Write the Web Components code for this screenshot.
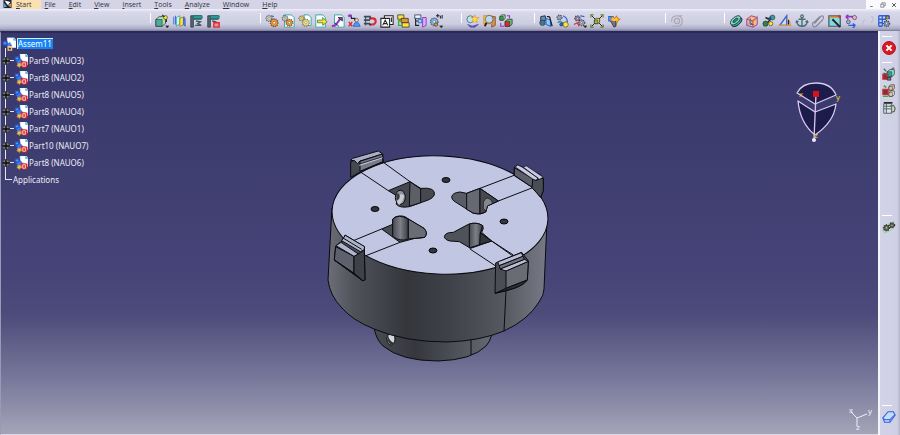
<!DOCTYPE html>
<html lang="en">
<head>
<meta charset="utf-8">
<title>Assem11</title>
<style>
  html, body { margin: 0; height: 100%; }
  body { font-family: "Open Sans", "Noto Sans", sans-serif; color: #33333f; overflow: hidden; background: #d2d2e6; }
</style>
</head>
<body>
<cad-app></cad-app>
<script>
const K = '#222', B = '#2b62d8', Y = '#ffe23a', O = '#e8932a', T = '#2fa39b', R = '#d92a35', G = '#3fae3a', P = '#9a35c8';
const gear = (x, y, r, c, k = '#3c3c48') => `<circle cx="${x}" cy="${y}" r="${r}" fill="none" stroke="${k}" stroke-width="2.200" stroke-dasharray="1 1.200"/><circle cx="${x}" cy="${y}" r="${r}" fill="${c}" stroke="${k}" stroke-width=".6"/><circle cx="${x}" cy="${y}" r="${r / 2.6}" fill="#fff" stroke="${k}" stroke-width=".6"/>`;
const page = (x, y, w = 9, h = 12) => `<path d="M${x} ${y}h${w - 3}l3 3v${h - 3}h-${w}z" fill="#f6ffff" stroke="${T}" stroke-width="1"/>`;
const cube = (x, y, s, c, d) => `<path d="M${x} ${y + s * .3}l${s * .35}-${s * .3}h${s * .65}v${s * .7}l-${s * .35} ${s * .3}h-${s * .65}z" fill="${d}" stroke="${K}" stroke-width=".8"/><path d="M${x} ${y + s * .3}h${s * .65}v${s * .7}h-${s * .65}z" fill="${c}" stroke="${K}" stroke-width=".6"/>`;
const line = (d, c = K, w = 1.3, f = 'none') => `<path d="${d}" fill="${f}" stroke="${c}" stroke-width="${w}"/>`;
const dot = (x, y, r, c) => `<circle cx="${x}" cy="${y}" r="${r}" fill="${c}" stroke="${K}" stroke-width=".6"/>`;
const more = line('M12 13.5h4l-2 2.5z', K, .3, K);
const ICONS = {
  logo: `<path d="M0 0h16v16H0z" fill="#152536"/><path d="M2 1l12 3-6 6z" fill="#fff"/><path d="M7 9l8-2v8z" fill="#f08a30"/><path d="M1 6l6 7-6 2z" fill="#49a5d5"/>`,
  box: cube(1, 3, 11, '#4dac9c', '#a6e5ad') + dot(12, 4, 2.2, Y) + line('M8 1l3 2M13 6v3') + more,
  plates: line('M2 3v9M4 2v10', B, 1) + line('M5 4l4-2v9l-4 3z', T, .9, '#c9f8e8') + line('M9 5l5-2v9l-5 2z', '#947c15', .9, Y) + line('M13 4l2 1v9l-2-2z', B, 1, '#5686de'),
  clamp: line('M2 2v13h3V6h9V2z', '#3a4650', 1, '#566370') + line('M5 2h10v3H5z', '#17736d', 1, T) + line('M8 8l5 1-3 2 4 2H7', '#3f5c66', 1.600),
  clampRed: line('M2 2v13h3V6h9V2z', '#3a4650', 1, '#566370') + line('M5 2h10v3H5z', '#17736d', 1, T) + line('M7 8l5 1', '#3f5c66', 1.600) + line('M9 10h6v5H9z', R, 1.6, '#f58a92'),
  gears: gear(4.5, 5, 3, '#e9d98a', '#45659c') + gear(10.500, 10, 4, '#f0a23c', '#7d3d12') + line('M7 2l3 1', B),
  gearPage: page(4, 1, 11, 14) + gear(4.500, 5, 2.8, '#e9d98a', '#45659c') + gear(9.500, 10, 3.500, '#f0a23c', '#7d3d12'),
  gearPale: page(7, 1, 8, 12) + gear(4, 5, 2.5, '#f2e58a', '#7b7334') + gear(9, 10, 3.600, '#efe596', '#7b7334'),
  pageOut: page(2, 1, 11, 14) + line('M4 7h6V4l5 5-5 4v-3H4z', '#29651f', .8, Y),
  pageRev: page(4, 1, 11, 14) + line('M1 14l4-1 6-8', P, 2.4) + line('M8 4h5v4z', K, .8, P) + line('M4 10l5 4', K, 1),
  person: line('M1 2h4v3h4v3', K) + line('M2 1h3v2H2z', P, 1, P) + dot(11, 7, 2, '#ffd39c') + line('M7 14l2-4h4l2 4z', B, 1, '#4aa1ed') + line('M2 9l4 5M6 9l-4 5', R, 1.6),
  magnet: line('M1 3h8M1 7h7M1 11h7', '#3b4c5a', 1.800) + line('M3 3v10', '#3b4c5a', 1.2) + line('M8 5h3a3.500 3.500 0 0 1 0 7H8', R, 2.4) + line('M8 4v2M8 11v2', K, 1.6),
  label: line('M5 2h10v10H5z', K, 1.2, '#fff') + line('M1 5h10v10H1z', K, 1.2, '#fff') + line('M3 13l3-6 3 6M4 11h4M13 4v5', K, 1.2),
  tree1: line('M2 1h7v5H2z', K, .8, Y) + line('M6 5h8v5H6z', K, .8, O) + line('M7 10h8v5H7z', K, .8, Y) + line('M3 6v7h4M3 8h3', G, 1.500),
  tree2: line('M2 1h7v4H2z', K, .8, '#e8f7ff') + line('M3 5v8h4M3 8h4', K) + line('M6 6h4v4H6z', B, 1, '#8fe1ef') + line('M11 4h4v9l-4 2z', P, 1.1, '#c7b9fb'),
  gearNum: gear(6, 9, 4, '#8fb6dc', '#2f5580') + dot(8, 12, 2, O) + line('M8 2h4M10 0v4M13 2v3M15 1v4', K, 1.2) + more,
  catalog: dot(5, 6, 4, '#b5e5ef') + line('M10 1l1 3h4l-3 2 1 4-3-2-3 2 1-4-2-2h3z', O, .8, Y) + line('M2 12l5 2 7-2-4 3H5z', B, 1, R),
  lens: line('M9 3h5v10l-4 2V6z', '#805020', 1, '#d69658') + line('M1 2h9v9H1z', O, 1.4, Y) + dot(7, 6, 4.500, '#bdd8ee') + line('M4 10l-2 4', K, 2),
  cubes: cube(1, 1, 6, '#35a856', '#8ff3a4') + cube(7, 6, 8, R, '#62c979') + line('M2 10v4h4M9 2h3v3', P),
  glass: line('M2 3l5-1 1 5-6 1z', K, 1, '#5f91c2') + dot(4, 10, 3.2, '#43768f') + line('M8 5l5 2v7l-5-2z', B, 1.2, '#8bd3f5') + line('M12 3l3 11M9 3h3', K, 1.500),
  sensor: gear(4, 4, 2.4, '#aecbe1') + line('M8 2q5 2 5 7', B, 1.4) + line('M2 10q3-3 6 1', T, 2) + dot(11, 12, 3, Y) + dot(6, 12, 1.800, B),
  pair: gear(5, 5, 2.600, '#a88cc8') + gear(10, 10, 3, '#b8b8c4') + line('M1 12l4-2 2 4', R, 1.4) + line('M8 2l5 1', B) + more,
  explode: line('M2 2l12 12M14 2L2 14', K, 1.1) + cube(5, 5, 6, '#90bd3b', Y) + line('M1 4V1h3M12 1h3v3M1 12v3h3M12 15h3v-3', '#55851f'),
  filter: line('M2 3h5v5H2z', B, 1.2, '#65a4d7') + line('M6 3l3 2 2-3 1 3 3 1-3 2-2 6-2-5-4-2z', '#c56e12', 1, '#ffc22e') + line('M4 8l4 7 2-1V8', K, .8, '#6c7698'),
  swirl: line('M2 9Q1 3 7 2q7 0 7 6t-6 6H2M14 2h-4M11 8q0-3-3-3t-3 3 3 3 3-3M8 8h1', '#a9a9b5', 1.400),
  swirlPale: line('M13 3q2 5-2 7M3 13q-2-5 2-7M11 3h3M2 13h4', '#c1c1cf', 1.5),
  coin: `<g transform="rotate(-40 8 8)"><ellipse cx="8" cy="9.500" rx="7" ry="3.600" fill="${T}" stroke="${K}"/><ellipse cx="8" cy="7" rx="7" ry="3.600" fill="#8fd0c6" stroke="#254e4b"/><ellipse cx="8" cy="7" rx="3.500" ry="1.400" fill="#238c80" stroke="#254e4b"/></g>`,
  prism: line('M2 6l5-4 7 2v8l-5 3-7-2z', P, 1.1, '#f3c16e') + line('M2 6l7 2 5-4M9 8v7', R, 1) + line('M6 5v7h4M5 9l4 3', B, 1.1) + line('M1 14L15 2', '#888', .8),
  joint: line('M6 10l4-4M4 4l4 2', K, 1.600) + dot(12, 4, 2.800, T) + dot(4, 11, 3, '#317f4f') + dot(10, 11, 2.400, Y) + dot(9, 5, 1.4, B),
  angle: line('M2 13L10 2v11z', B, 1.500, '#c9dcff') + line('M1 13h14M10 5q4 3 4 8', O, 1.500) + line('M12 7v5', K),
  anchor: line('M8 4v10M4 6h8M2 9q1 5 6 5t6-5M1 10l1-2 2 1M12 9l2-1 1 2', '#456f73', 1.6) + `<circle cx="8" cy="2.600" r="1.600" fill="none" stroke="#456f73" stroke-width="1.300"/>`,
  clip: line('M4 11l7-8q2-2 3 0t-1 4l-7 7q-3 2-4-1t2-4l6-6', '#858592', 1.3),
  wizard: line('M1 2h13v12H1z', '#405a64', 1.4, '#84d9db') + line('M1 3h13', '#cd7a29', 2) + line('M5 6l3 3M8 9l6 6', K, 2.200) + line('M13 1v4M11 3h4', R, 1),
  cycle: line('M2 3h6q5 0 5 3M2 3l3-2M2 3l3 3', P, 1.8) + dot(12, 4, 2.4, '#efabd9') + dot(5, 9, 2.2, '#aaa9d8') + line('M5 13h8M13 13l-3-2M13 13l-3 3', B, 1.6),
  pattern: line('M2 2h12M2 6h8M2 10h5M2 14h4M2 2v12M6 2v12M10 2v5M14 2v4', B, 1.500) + gear(11, 11, 3, '#83a9c4') + dot(12, 4, 1.600, O),
  close: `<circle cx="8" cy="8" r="7.400" fill="#e01620" stroke="#a40c18"/><path d="M5 5l6 6M11 5l-6 6" stroke="#fff" stroke-width="2.400"/>`,
  geo1: cube(6, 3, 8, T, '#97e8da') + line('M1 8h5v6H1z', R, 1.400, '#803040') + line('M2 2l3 3M2 7l6 2M11 2l3-1', '#4b6c5a', 1.5) + line('M6 12h4v3H6z', K, .8, '#777'),
  geo2: cube(8, 1, 6, '#dec9a4', '#ffe2ad') + cube(8, 8, 6, '#e1d5b1', '#fff') + line('M1 6h6v6H1z', R, 1.400, '#803040') + line('M2 2l3 2M1 14h6', G, 1.800),
  list: line('M2 3h9v11H2zM2 6h9M2 9h9M5 3v11', '#54616f', 1.1, '#d8e8de') + line('M2 2h10', K, 1.6) + line('M9 6l4-1 2 3-1 4-4 1', '#6b7355', 1.500),
  mech: line('M1 12l3-6 9-4-2 9-8 4z', '#8bd2a1', 1, '#bfe3ce') + gear(5, 9, 3, '#69695a', '#20201d') + gear(11.500, 6, 2.500, '#777563', '#20201d'),
  eraser: line('M1 9l6-7h6l2 4-6 8H3z', B, 1.2, '#c8dcff') + line('M1 9l2 2h6l6-6M9 11v3', '#3f6fe0', 1.200),
  part: line('M7 0h7l2 3v9H8z', '#d9edff', .8, '#fff') + `<path d="M13 0l3 3h-3z" fill="#29a7d5"/>` + gear(3.500, 5, 2, '#3e7bed', '#1f57d8') + line('M2 8l5-3 3 4-5 2z', '#1f57d8', 1, '#367ae5') + line('M8 8l7 1v6H9z', '#cc2027', .6, '#e52b2b') + line('M10 10h3v4h-3z', '#fff', .8) + gear(6, 12.500, 2, '#f4ca62', '#c79440'),
  root: line('M6 1h8l2 3v8H7z', '#d9edff', .8, '#fff') + `<path d="M13 1l3 3h-3z" fill="#29a7d5"/>` + gear(3.500, 7, 2.200, '#3e7bed', '#1f57d8') + gear(8, 9, 2, '#3e7bed', '#1f57d8') + line('M7 11h4v4H7z', '#f4ca62', 1.4),
  plus: `<circle cx="8" cy="8" r="7" fill="#7d817e" stroke="#2c2e38" stroke-width="1.200"/><path d="M8 1v14M1 8h14" stroke="#0a0a0d" stroke-width="2.600"/>`,
  min: line('M3 12h7', '#555', 2),
  restore: line('M2 6h8v8H2zM5 6V2h9v8h-4', '#555', 1.600),
  shut: line('M3 3l10 10M13 3L3 13', '#444', 2.400)
};

function define(name, markup) {
  const t = document.createElement('template');
  customElements.define(name, class extends HTMLElement {
    connectedCallback() {
      if (this.shadowRoot) return;
      t.innerHTML = typeof markup === 'function' ? markup(this) : markup;
      this.attachShadow({ mode: 'open' }).append(t.content.cloneNode(true));
    }
  });
}

define('cad-icon', el => `
  <style>:host { display: block; width: 14px; height: 14px; flex: none; } svg { display: block; width: 100%; height: 100%; }</style>
  <svg viewBox="0 0 16 16" aria-hidden="true">${ICONS[el.getAttribute('name')]}</svg>`);

define('cad-tool', el => `
  <style>
    :host { display: block; flex: none; }
    button { display: block; border: 0; padding: 0; background: none; cursor: pointer; }
  </style>
  <button type="button" aria-label="${el.getAttribute('name')}"><cad-icon name="${el.getAttribute('name')}"></cad-icon></button>`);

define('cad-menu-item', el => {
  const s = el.getAttribute('label');
  return `
  <style>
    :host { display: flex; }
    button { font: inherit; color: inherit; border: 0; background: none; padding: 0 9px 0 4px; line-height: 8px; cursor: pointer; }
    :host([active]) button { background: #fbe0b2; }
    u { text-underline-offset: 1px; text-decoration-thickness: 1px; }
  </style>
  <button type="button"><u>${s[0]}</u>${s.slice(1)}</button>`;
});

define('cad-menu-bar', `
  <style>
    :host { display: flex; height: 9px; font-size: 7px; background: #d4d4e6; }
    nav { display: flex; flex: 1; }
    .logo { width: 12px; display: grid; justify-items: end; }
    .logo cad-icon { width: 9px; height: 8px; }
    .win { display: flex; justify-content: space-around; align-items: center; width: 34px; background: #fafafd; }
    .win button { border: 0; padding: 0; background: none; }
    .win cad-icon { width: 6px; height: 6px; }
  </style>
  <div class="logo"><cad-icon name="logo"></cad-icon></div>
  <nav aria-label="Main menu">
    <cad-menu-item label="Start" active></cad-menu-item>
    ${['File', 'Edit', 'View', 'Insert', 'Tools', 'Analyze', 'Window', 'Help'].map(s => `<cad-menu-item label="${s}"></cad-menu-item>`).join('')}
  </nav>
  <div class="win">
    <button aria-label="Minimize"><cad-icon name="min"></cad-icon></button>
    <button aria-label="Restore"><cad-icon name="restore"></cad-icon></button>
    <button aria-label="Close"><cad-icon name="shut"></cad-icon></button>
  </div>`);

define('cad-tool-group', `
  <style>
    :host { display: flex; align-items: center; position: relative; padding-left: 5px; }
    :host::before { content: ""; position: absolute; left: 0; top: 3px; height: 10px; border-left: 1px solid #fff; }
    div { display: flex; justify-content: space-between; flex: 0 0 var(--span); }
  </style>
  <div><slot></slot></div>`);

const group = (span, names) => `<cad-tool-group style="--span:${span}px">${names.split(' ').map(n => `<cad-tool name="${n}"></cad-tool>`).join('')}</cad-tool-group>`;

define('cad-toolbar', `
  <style>
    :host {
      display: grid; grid-template-columns: 150fr 110fr 201fr 73fr 131fr 59fr 176fr; height: 22px; padding-top: 1px; box-sizing: border-box;
      background: linear-gradient(#f0f0fa, #d8d8ea 3px, #cdcde1 15px, #a9a9c3 20px, #77779a);
    }
  </style>
  <span></span>
  ${group(65, 'box plates clamp clampRed')}
  ${group(178, 'gears gearPage gearPale pageOut pageRev person magnet label tree1 tree2 gearNum')}
  ${group(47, 'catalog lens cubes')}
  ${group(82, 'glass sensor pair explode filter')}
  ${group(14, 'swirl')}
  ${group(162, 'coin prism joint angle anchor clip wizard cycle swirlPale pattern')}`);

define('cad-tree-item', `
  <style>
    :host { display: flex; align-items: center; height: 17px; position: relative; }
    button { border: 0; padding: 0; background: none; z-index: 1; }
    button cad-icon { width: 8px; height: 8px; }
    i { width: 4px; border-top: 1px solid #e5e5ee; }
    span { padding-left: 1px; white-space: nowrap; }
  </style>
  <button type="button" aria-label="Expand"><cad-icon name="plus"></cad-icon></button><i></i>
  <cad-icon name="part"></cad-icon><span><slot></slot></span>`);

define('cad-tree', `
  <style>
    :host { display: block; font-family: "Noto Sans", "Open Sans", sans-serif; font-size: 8px; color: #ececf4; padding: 2px 0 0 1px; }
    .root { display: flex; align-items: center; height: 17px; }
    .root span { background: #1683f5; color: #fff; line-height: 10px; padding-right: 1px; border: solid #d8ecff; border-width: 1px 0 0 1px; margin-left: 1px; white-space: nowrap; }
    .kids { position: relative; }
    .kids::before { content: ""; position: absolute; left: 3px; top: -4px; bottom: 8px; border-left: 1px solid #e5e5ee; }
    .app { display: flex; align-items: center; height: 17px; padding-left: 3px; }
    .app i { width: 7px; border-top: 1px solid #e5e5ee; margin-right: 1px; }
  </style>
  <div class="root"><cad-icon name="root"></cad-icon><span>Assem11</span></div>
  <div class="kids">
    ${['Part9 (NAUO3)', 'Part8 (NAUO2)', 'Part8 (NAUO5)', 'Part8 (NAUO4)', 'Part7 (NAUO1)', 'Part10 (NAUO7)', 'Part8 (NAUO6)'].map(s => `<cad-tree-item>${s}</cad-tree-item>`).join('')}
    <div class="app"><i></i><span>Applications</span></div>
  </div>`);

define('cad-model', `
  <style>:host { display: block; } svg { display: block; width: 100%; height: 100%; }</style>
  <svg viewBox="1 33 877 401" role="img" aria-label="Four-jaw chuck assembly">
    <defs>
      <linearGradient id="side"><stop offset="0" stop-color="#6b6d78"/><stop offset=".12" stop-color="#50525a"/><stop offset=".36" stop-color="#34363c"/><stop offset=".55" stop-color="#3f4148"/><stop offset=".8" stop-color="#565860"/><stop offset="1" stop-color="#777985"/></linearGradient>
      <linearGradient id="base"><stop offset="0" stop-color="#4a4c54"/><stop offset=".35" stop-color="#35373d"/><stop offset="1" stop-color="#666872"/></linearGradient>
      <linearGradient id="bore"><stop offset="0" stop-color="#494b53"/><stop offset=".5" stop-color="#7d7f89"/><stop offset="1" stop-color="#3a3c43"/></linearGradient>
    </defs>
    <g stroke="#0b0b10" stroke-width="1" stroke-linejoin="round">
      <path d="M374 326Q375 338 383 346Q401 361 438 361Q472 360 486 346Q490 342 492 334z" fill="url(#base)"/>
      <path d="M471 338v17"/>
      <ellipse cx="391" cy="339" rx="4" ry="6" fill="#d5d6df"/><path d="M388 335q1 6 6 8q-3 3-5 0t-1-8" fill="#333" stroke="none"/>
      <path d="M332 208L328 280Q330 296 342 308Q352 320 374 329Q405 342 447 342Q480 341 504 331Q528 320 539 302Q544 295 544 289L547 220z" fill="url(#side)"/>
      <ellipse cx="440" cy="215" rx="108" ry="59" transform="rotate(2.500 440 215)" fill="#c1c7e2"/>
      <path d="M506 290l-2 41"/>
    </g>
    <g transform="translate(320 145) scale(.33333)" stroke="#0b0b10" stroke-width="3" stroke-linejoin="round">
      <path d="M120 80L205 137M190 52L270 110" fill="none"/>
      <path d="M205 137L270 110L302 130Q348 126 343 150Q338 160 325 165L268 185Q240 190 229 178Q228 165 235 155z" fill="#46484f"/>
      <path d="M270 110L302 132V173L268 184z" fill="#5d5f67"/>
      <ellipse cx="241" cy="157" rx="15" ry="21" fill="#91939d"/><path d="M229 155q17-13 24-2q-3 14-15 27q-9-4-9-25" fill="#c9cad4" stroke="none"/><path d="M229 146q14-2 9 14q-3 7-9 8z" fill="#3b3c42" stroke="none"/>
      <path d="M185 252L218 238Q215 220 228 215Q250 208 265 222L312 250Q325 264 314 277Q303 280 285 280L240 292z" fill="#4a4c54"/>
      <path d="M218 222Q235 206 265 222V282Q243 291 218 275z" fill="url(#bore)"/>
      <path d="M265 222L312 250Q325 264 314 277L265 282z" fill="#6b6d76"/>
      <path d="M92 50L92 97L122 80L190 52L188 28L175 20z" fill="#46484f"/>
      <path d="M92 46L98 40L175 18L188 27L120 48L112 56L104 47z" fill="#a9aec5"/>
      <path d="M120 49L188 27V50L120 79z" fill="#777a88"/>
      <path d="M118 61L188 38" fill="none" stroke="#c8cde5"/><path d="M118 57L188 35" fill="none" stroke-width="2"/>
    </g>
    <g transform="translate(430 145) scale(.33333)" stroke="#0b0b10" stroke-width="3" stroke-linejoin="round">
      <path d="M150 130L255 90M205 168L308 128M185 288L250 334" fill="none"/>
      <path d="M65 155Q68 143 90 141L110 145L150 130L205 168L172 183L168 200Q155 210 130 205L75 170Q65 165 65 155z" fill="#5a5c65"/>
      <path d="M110 145L150 130V207Q130 209 110 193z" fill="#666973"/>
      <path d="M150 130L205 168L172 183L168 200L150 207z" fill="#474950"/>
      <path d="M160 190V175Q162 160 173 159Q184 161 188 175L172 183L168 198z" fill="#85878f" stroke-width="2"/>
      <path d="M43 275Q45 262 70 262L115 238Q140 230 158 242Q163 250 155 262L185 288L122 310L88 290L60 288Q45 285 43 275z" fill="#50525a"/>
      <path d="M118 237Q140 230 158 242L151 264V298L118 309z" fill="url(#bore)"/>
      <path d="M151 264L185 288L149 299z" fill="#34363d"/>
      <path d="M253 67L262 60L330 88L340 100V137L332 157L308 128L253 92z" fill="#50525b"/>
      <path d="M253 68L308 101V128L253 91z" fill="#5c5f6a"/>
      <path d="M308 101L318 107L328 101L340 100V137L332 157L306 128z" fill="#4b4d55"/>
      <path d="M256 66L263 60L276 66L324 99L318 106L308 102zM278 65L290 63L340 97L328 103z" fill="#c6cbe2" stroke-width="2"/>
    </g>
    <g transform="translate(320 220) scale(.33333)" stroke="#0b0b10" stroke-width="3" stroke-linejoin="round">
      <path d="M100 62L185 27M138 107L240 67M450 87L530 140M515 63L580 105" fill="none"/>
      <path d="M47 78L68 62L75 45L133 80L135 180L128 182L43 120z" fill="#4b4d56"/>
      <path d="M47 80L102 109V160L43 120z" fill="#5e606b"/>
      <path d="M102 109L122 97L133 90L135 180L128 182L102 160z" fill="#3f4148"/>
      <path d="M48 77L63 67L115 102L102 109zM65 62L76 46L134 80L132 90L121 95z" fill="#afb5cd"/>
      <path d="M69 54L125 88" fill="none"/>
      <path d="M43 120L102 160L128 182z" fill="#24262d"/>
      <path d="M527 129L605 97L625 123L622 180Q605 205 525 220z" fill="#4b4d55"/>
      <path d="M558 153L625 124L622 180L558 205z" fill="#696b75"/>
      <path d="M533 126L604 98L609 109L538 137zM540 147L613 118L625 124L558 153z" fill="#b8bdd5"/>
      <path d="M538 137L609 109L613 118L540 147z" fill="#70737f"/>
      <path d="M525 220L558 205L622 180Q606 202 558 211z" fill="#2e3036"/>
    </g>
    <g fill="#33353c" stroke="#08080b"><ellipse cx="446" cy="180" rx="4" ry="2.500"/><ellipse cx="375" cy="209" rx="4" ry="2.500"/><ellipse cx="504" cy="221.500" rx="4" ry="2.500"/><ellipse cx="433" cy="250.500" rx="4" ry="2.500"/></g>
  </svg>`);

define('cad-compass', `
  <style>:host { display: block; width: 48px; height: 66px; } svg { display: block; width: 100%; height: 100%; } text { font: 8px "Liberation Sans", sans-serif; fill: #e6d63c; }</style>
  <svg viewBox="793 79 48 66" role="img" aria-label="Compass">
    <g fill="#1d1b49" stroke="#d8c9f0" stroke-width="1.300" stroke-linejoin="round">
      <path d="M797 93Q802 83 816 83Q831 83 836 95L815 104z"/>
      <path d="M798 101L815 112L836 104Q834 122 815 135Q800 123 798 101z"/>
      <path d="M816 94L814 139" fill="none"/>
    </g>
    <path d="M813 91h6v6h-6z" fill="#db1018"/><circle cx="814" cy="140" r="2" fill="#eeeaff"/>
    <text x="799" y="97">x</text><text x="836" y="100">y</text><text x="814" y="138">z</text>
  </svg>`);

define('cad-axes', `
  <style>:host { display: block; width: 27px; height: 26px; } svg { display: block; width: 100%; height: 100%; } text { font: 8px "Liberation Sans", sans-serif; fill: #f0f0f6; }</style>
  <svg viewBox="847 405 27 26" role="img" aria-label="Axes">
    <path d="M851 412l6 6l10-4M857 418v8" fill="none" stroke="#f0f0f6"/>
    <text x="849" y="413">x</text><text x="868" y="414">y</text><text x="856" y="430">z</text>
  </svg>`);

define('cad-viewport', `
  <style>
    :host { display: block; position: relative; border-left: 1px solid #9a9ab8; border-bottom: 1px solid #d9d9e6; border-top: 2px solid #29285a; box-sizing: border-box;
      background: linear-gradient(#38376c, #3e3d70 30%, #454377 58%, #4c4b7a 70%, #77779a 86%, #a4a4b8); }
    cad-tree { position: absolute; left: 0; top: 0; }
    cad-model { position: absolute; inset: 0; }
    cad-compass { position: absolute; right: 37px; top: 46px; }
    cad-axes { position: absolute; right: 4px; bottom: 3px; }
  </style>
  <cad-model></cad-model><cad-tree></cad-tree><cad-compass></cad-compass><cad-axes></cad-axes>`);

define('cad-side-group', `
  <style>
    :host { display: flex; flex-direction: column; align-items: center; gap: 3px; }
    :host::before { content: ""; width: 10px; border-top: 1px solid #fff; margin-bottom: 1px; align-self: start; margin-left: 2px; }
  </style><slot></slot>`);

define('cad-side-bar', `
  <style>
    :host { display: grid; grid-template-rows: 26fr 153fr 189fr 30fr; padding: 5px 2px 0 0; box-sizing: border-box;
      border-left: 2px solid #f4f4fb; background: linear-gradient(90deg, #d3d3e8, #cfcfe5 17px, #b2b2c8); }
  </style>
  <cad-side-group><cad-tool name="close"></cad-tool></cad-side-group>
  <cad-side-group><cad-tool name="geo1"></cad-tool><cad-tool name="geo2"></cad-tool><cad-tool name="list"></cad-tool></cad-side-group>
  <cad-side-group><cad-tool name="mech"></cad-tool></cad-side-group>
  <cad-side-group><cad-tool name="eraser"></cad-tool></cad-side-group>`);

define('cad-app', `
  <style>
    :host { display: grid; grid-template-rows: auto auto 1fr; height: 100vh; }
    main { display: grid; grid-template-columns: 1fr 22px; min-height: 0; }
  </style>
  <cad-menu-bar></cad-menu-bar>
  <cad-toolbar></cad-toolbar>
  <main><cad-viewport></cad-viewport><cad-side-bar></cad-side-bar></main>`);
</script>
</body>
</html>
